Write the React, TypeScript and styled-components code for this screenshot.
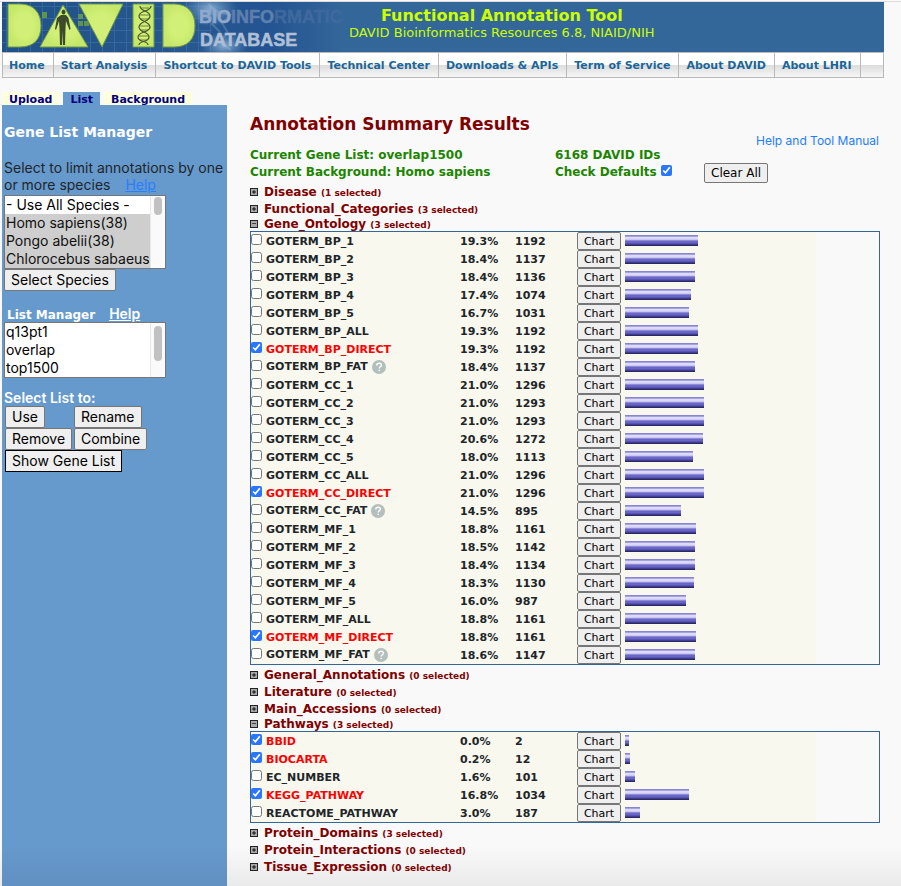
import React from 'react';
import styled, { createGlobalStyle } from 'styled-components';

const verdana = "Verdana, 'DejaVu Sans', sans-serif";
const system = "Inter, 'Liberation Sans', sans-serif";

const GlobalStyle = createGlobalStyle`
  *, *::before, *::after { box-sizing: border-box; }
  body {
    margin: 0;
    background: #f9f9f9;
    color: #212529;
    font-family: ${verdana};
    font-size: 11px;
  }
`;

const Page = styled.div`
  display: flex;
  flex-direction: column;
  min-height: 100vh;
  padding-left: 2px;
  background: linear-gradient(to top, #eaeaea, #f9f9f9 40px);
`;

const TopRule = styled.div`
  height: 2px;
  margin-left: -2px;
  border-bottom: 1px solid #dcdcdc;
`;

const Header = styled.header`
  display: flex;
  height: 50px;
  margin-right: 17px;
  background: #336699;
`;

const Logo = styled.svg`
  flex: none;
  width: 340px;
  height: 50px;
`;

const Titles = styled.div`
  padding: 4px 0 0 7px;
  color: #ccff00;
  text-align: center;
  white-space: nowrap;
`;

const ToolTitle = styled.div`
  font-size: 16px;
  font-weight: bold;
  line-height: 20px;
`;

const ToolSubtitle = styled.div`
  font-size: 13px;
  line-height: 14px;
`;

const Nav = styled.nav`
  display: flex;
  height: 26px;
  margin-right: 17px;
  border: 1px solid #b9b9b9;
  background: linear-gradient(#ffffff 12px, #dcdcdc 12px, #f6f6f6);
`;

const NavLink = styled.a`
  padding: 0 8px 0 6px;
  border-right: 1px solid #b9b9b9;
  margin-right: 1px;
  color: #1b6699;
  font-weight: bold;
  line-height: 25px;
  text-decoration: none;
  white-space: nowrap;
`;

const Tabs = styled.div`
  display: flex;
  gap: 4px;
  margin-top: 14px;
`;

const Tab = styled.a<{ $active?: boolean }>`
  height: 13px;
  padding: 0 7px;
  background: ${(p) => (p.$active ? '#6699cc' : '#ffffdd')};
  color: #000080;
  font-weight: bold;
  line-height: 15px;
  text-decoration: none;
`;

const Columns = styled.div`
  display: flex;
  flex: 1;
`;

const Sidebar = styled.aside`
  flex: none;
  width: 225px;
  padding: 17px 2px 0;
  background: linear-gradient(to top, #6190c2, #6699cc 40px);
  font-family: ${system};
  font-size: 14px;
`;

const SideTitle = styled.h2`
  margin: 0 0 17px;
  color: #fff;
  font-family: ${verdana};
  font-size: 14px;
  line-height: 20px;
`;

const SideText = styled.p`
  margin: 0 0 2px;
  line-height: 17px;
`;

const HelpLink = styled.a<{ $light?: boolean }>`
  margin-left: ${(p) => (p.$light ? 14 : 11)}px;
  color: ${(p) => (p.$light ? '#fff' : '#2a7fff')};
  font-family: ${system};
  font-size: 14px;
  font-weight: ${(p) => (p.$light ? 600 : 400)};
`;

const ListFrame = styled.div<{ $rows: number }>`
  display: flex;
  width: 162px;
  height: ${(p) => p.$rows * 18 + 2}px;
  border: 1px solid #767676;
  background: #fff;
`;

const ListBox = styled.select`
  flex: 1;
  min-width: 0;
  padding: 0;
  border: 0;
  border-radius: 0;
  outline: none;
  background: #fff;
  color: #000;
  font-family: ${system};
  font-size: 14px;
  scrollbar-width: none;

  option {
    min-height: 18px;
    padding: 0 1px;
    line-height: 18px;
  }
  option:checked { background: #cecece linear-gradient(#cecece, #cecece); }
`;

const Track = styled.div<{ $top: number }>`
  width: 15px;
  padding: ${(p) => p.$top}px 3px 0;
  border-left: 1px solid #e8e8e8;
  background: #fafafa;
`;

const Thumb = styled.div<{ $length: number }>`
  height: ${(p) => p.$length}px;
  border-radius: 4px;
  background: #c1c1c1;
`;

const Button = styled.button<{ $dark?: boolean }>`
  height: 22px;
  padding: 0 6px;
  border: 1px solid ${(p) => (p.$dark ? '#000' : '#767676')};
  border-radius: ${(p) => (p.$dark ? 0 : 2)}px;
  background: #efefef;
  color: #000;
  font-family: ${system};
  font-size: 14px;
  line-height: 20px;
  white-space: nowrap;
`;

const ListHeading = styled.div`
  margin-top: 16px;
  padding-left: 3px;
  color: #fff;
  font-family: ${verdana};
  font-size: 12px;
  font-weight: bold;
  line-height: 14px;
`;

const ActionsTitle = styled.div`
  margin-top: 12px;
  color: #fff;
  font-weight: 600;
  line-height: 16px;
`;

const Actions = styled.div`
  display: grid;
  grid-template-columns: 67px auto;
  justify-content: start;
  justify-items: start;
  column-gap: 2px;
  padding-left: 1px;
`;

const WideAction = styled.div`
  grid-column: 1 / -1;
`;

const Main = styled.main`
  flex: 1;
  padding: 9px 21px 0 23px;
`;

const Heading = styled.h1`
  margin: 0;
  color: #800000;
  font-size: 17px;
  line-height: 20px;
`;

const ManualRow = styled.div`
  text-align: right;
  font-family: ${system};
  font-size: 12px;
  line-height: 13px;

  a {
    padding-right: 1px;
    color: #1f7cff;
    text-decoration: none;
  }
`;

const Info = styled.div`
  display: grid;
  grid-template-columns: 305px 149px auto;
  grid-auto-rows: 17px;
  justify-content: start;
  margin-bottom: 2px;
  color: #1c8500;
  font-size: 12px;
  font-weight: bold;
  line-height: 17px;
`;

const ClearButton = styled(Button)`
  grid-column: 3;
  align-self: center;
  height: 20px;
  font-family: ${verdana};
  font-size: 12px;
  line-height: 18px;
`;

const Check = styled.input`
  flex: none;
  width: 11px;
  height: 11px;
  margin: 0;
  accent-color: #2a76ff;
`;

const DefaultsLabel = styled.label`
  display: flex;
  gap: 4px;

  input { margin-top: 1px; }
`;

const Category = styled.div<{ $open?: boolean }>`
  display: flex;
  align-items: center;
  gap: 6px;
  height: ${(p) => (p.$open ? 14 : 17)}px;
  color: #800000;
  font-size: 12px;
  font-weight: bold;
`;

const Toggle = styled.button`
  display: block;
  width: 8px;
  height: 8px;
  padding: 0;
  border: 0;
  background: none;

  svg { display: block; }
`;

const Selected = styled.span`
  font-size: 9px;
`;

const Box = styled.div`
  margin-bottom: 1px;
  border: 1px solid #336699;
`;

const Table = styled.table`
  width: 90%;
  border-collapse: collapse;
  table-layout: fixed;
  background: #f8f8ee;
  font-size: 11px;
  font-weight: bold;
`;

const Col = styled.col<{ $w?: number }>`
  width: ${(p) => (p.$w ? `${p.$w}px` : 'auto')};
`;

const Cell = styled.td`
  height: 18px;
  padding: 0;
  vertical-align: top;
`;

const FigureCell = styled(Cell)`
  padding-top: 2px;
  line-height: 16px;
`;

const TermLabel = styled.label<{ $on: boolean; $raised: boolean }>`
  display: flex;
  height: 18px;
  gap: 4px;
  color: ${(p) => (p.$on ? '#ff0000' : 'inherit')};
  line-height: ${(p) => (p.$raised ? 18 : 20)}px;

  input { margin-top: 2px; }
  svg { margin-top: 2px; }
`;

const ChartButton = styled.button`
  display: block;
  width: 44px;
  height: 18px;
  padding: 1px 0 0;
  border: 1px solid #767676;
  border-radius: 2px;
  background: #efefef;
  color: #000;
  font-family: ${verdana};
  font-size: 11px;
  line-height: 16px;
`;

const Bar = styled.div`
  height: 11px;
  margin-top: 3px;
  background: linear-gradient(
    #8783d6 0 1px, #a7a3e2 1px 2px, #dddaf6 2px 4px, #c9c6ef 4px 5px,
    #8f8bd9 5px 6px, #6a66c6 6px 8px, #5652b2 8px 9px, #403c90 9px 10px, #2c2962 10px 11px
  );
`;

type Term = [name: string, percent: string, count: number, bar: number, on?: boolean];

const ontology: Term[] = [
  ['GOTERM_BP_1', '19.3%', 1192, 73],
  ['GOTERM_BP_2', '18.4%', 1137, 70],
  ['GOTERM_BP_3', '18.4%', 1136, 70],
  ['GOTERM_BP_4', '17.4%', 1074, 66],
  ['GOTERM_BP_5', '16.7%', 1031, 64],
  ['GOTERM_BP_ALL', '19.3%', 1192, 73],
  ['GOTERM_BP_DIRECT', '19.3%', 1192, 73, true],
  ['GOTERM_BP_FAT', '18.4%', 1137, 70],
  ['GOTERM_CC_1', '21.0%', 1296, 79],
  ['GOTERM_CC_2', '21.0%', 1293, 79],
  ['GOTERM_CC_3', '21.0%', 1293, 79],
  ['GOTERM_CC_4', '20.6%', 1272, 78],
  ['GOTERM_CC_5', '18.0%', 1113, 68],
  ['GOTERM_CC_ALL', '21.0%', 1296, 79],
  ['GOTERM_CC_DIRECT', '21.0%', 1296, 79, true],
  ['GOTERM_CC_FAT', '14.5%', 895, 56],
  ['GOTERM_MF_1', '18.8%', 1161, 71],
  ['GOTERM_MF_2', '18.5%', 1142, 70],
  ['GOTERM_MF_3', '18.4%', 1134, 70],
  ['GOTERM_MF_4', '18.3%', 1130, 69],
  ['GOTERM_MF_5', '16.0%', 987, 61],
  ['GOTERM_MF_ALL', '18.8%', 1161, 71],
  ['GOTERM_MF_DIRECT', '18.8%', 1161, 71, true],
  ['GOTERM_MF_FAT', '18.6%', 1147, 70],
];

const pathways: Term[] = [
  ['BBID', '0.0%', 2, 4, true],
  ['BIOCARTA', '0.2%', 12, 5, true],
  ['EC_NUMBER', '1.6%', 101, 10],
  ['KEGG_PATHWAY', '16.8%', 1034, 64, true],
  ['REACTOME_PATHWAY', '3.0%', 187, 15],
];

const categories: { name: string; selected: number; terms?: Term[] }[] = [
  { name: 'Disease', selected: 1 },
  { name: 'Functional_Categories', selected: 3 },
  { name: 'Gene_Ontology', selected: 3, terms: ontology },
  { name: 'General_Annotations', selected: 0 },
  { name: 'Literature', selected: 0 },
  { name: 'Main_Accessions', selected: 0 },
  { name: 'Pathways', selected: 3, terms: pathways },
  { name: 'Protein_Domains', selected: 3 },
  { name: 'Protein_Interactions', selected: 0 },
  { name: 'Tissue_Expression', selected: 0 },
];

const navItems = [
  'Home', 'Start Analysis', 'Shortcut to DAVID Tools', 'Technical Center',
  'Downloads & APIs', 'Term of Service', 'About DAVID', 'About LHRI',
];

function DavidLogo() {
  return (
    <Logo viewBox="0 0 340 50" aria-hidden="true">
      <defs>
        <linearGradient id="sky" x1="0" x2="1">
          <stop offset="0" stopColor="#1f5288" />
          <stop offset="0.55" stopColor="#27588f" />
          <stop offset="0.78" stopColor="#235391" />
          <stop offset="1" stopColor="#336699" />
        </linearGradient>
        <radialGradient id="glow">
          <stop offset="0" stopColor="#9fc0df" stopOpacity="0.8" />
          <stop offset="1" stopColor="#6f9cc8" stopOpacity="0" />
        </radialGradient>
        <pattern id="grid" width="12" height="12" patternUnits="userSpaceOnUse">
          <path d="M0 4.500H12M4.500 0V12" stroke="#4579ad" strokeWidth="1" opacity="0.5" />
        </pattern>
        <radialGradient id="lime">
          <stop offset="0.5" stopColor="#d2f078" />
          <stop offset="1" stopColor="#c5e86a" />
        </radialGradient>
      </defs>
      <rect width="340" height="50" fill="url(#sky)" />
      <rect width="210" height="50" fill="url(#grid)" />
      <ellipse cx="208" cy="7" rx="28" ry="18" fill="url(#glow)" />
      <ellipse cx="222" cy="44" rx="24" ry="14" fill="url(#glow)" />
      <path d="M206 2l10 8 12 3-8 8 6 10-9 9 12 8M216 10l-6 12 8 8" fill="none" stroke="#b4cde5" strokeWidth="2" opacity="0.25" />
      <g fill="#5f9350">
        <rect x="40" y="10" width="5" height="6" />
        <rect x="76" y="12" width="5" height="5" />
        <rect x="76" y="19" width="5" height="5" />
        <rect x="82" y="19" width="5" height="5" />
      </g>
      <g fill="url(#lime)" stroke="#719744" strokeWidth="1">
        <path d="M6 2h12c14 0 21 9 21 22s-7 21-21 21H6z" />
        <path d="M61 3l25 42H38z" />
        <path d="M77 2h44l-21 43z" />
        <path d="M131 2h21v43h-21z" />
        <path d="M161 2h11c14 0 21 9 21 22s-7 21-21 21h-11z" />
      </g>
      <g fill="#3d4a2b">
        <ellipse cx="61.500" cy="10" rx="2" ry="2.500" />
        <path d="M59 13h5l2.500 3 2 11-1 1-3.500-9-.5 8-.5 16h-2l-.5-14-.5 14h-2l-.5-16-.5-8-3 9-1-1 2-11z" />
      </g>
      <g fill="none" stroke="#46542c" strokeWidth="1.200">
        <path d="M138 4c0 6 10 4 10 10s-11 5-11 11 10 4 10 10-10 3-10 8" />
        <path d="M149 4c0 6-12 4-12 10s11 5 11 11-12 4-12 10 10 3 10 8" />
        <path d="M139 6h8M138 13h9M138 17h8M138 24h9M138 28h8M137 34h9M138 38h7" strokeWidth="0.700" />
      </g>
      <g fontFamily="'Liberation Sans', sans-serif" fontWeight="bold" strokeWidth="0.500">
        <text x="197" y="21" fontSize="18" fill="#8fa9cd" stroke="#8fa9cd">BIO<tspan fill="#5d7fae" stroke="#5d7fae">INFO</tspan><tspan fill="#3f699e" stroke="#3f699e">RMATIC</tspan></text>
        <text x="198" y="44" fontSize="18" fill="#aebfd6" stroke="#aebfd6">DATABASE</text>
      </g>
    </Logo>
  );
}

function ToggleIcon({ open }: { open: boolean }) {
  return (
    <svg width="8" height="8" viewBox="0 0 8 8" shapeRendering="crispEdges">
      <rect width="8" height="8" fill="#222" />
      <rect x="1" y="1" width="6" height="6" fill="#aaa" />
      {open ? (
        <rect x="2" y="3" width="4" height="1" fill="#444" />
      ) : (
        <>
          <path d="M3 2h2v1h1v2H5v1H3V5H2V3h1z" fill="#666" />
          <rect x="3" y="3" width="2" height="2" fill="#333" />
        </>
      )}
    </svg>
  );
}

function HelpIcon() {
  return (
    <svg width="14" height="14" viewBox="0 0 14 14">
      <circle cx="7" cy="7" r="7" fill="#b3bfbd" />
      <path d="M4.800 5.400c0-3 4.600-2.800 4.600-.2 0 1.500-2.200 1.600-2.200 3.200M7.200 9.700v1.400" fill="none" stroke="#fff" strokeWidth="1.500" />
    </svg>
  );
}

function TermTable({ name, terms }: { name: string; terms: Term[] }) {
  return (
    <Box>
      <Table aria-label={name}>
        <colgroup>
          <Col $w={209} />
          <Col $w={55} />
          <Col $w={62} />
          <Col $w={48} />
          <Col />
        </colgroup>
        <tbody>
          {terms.map(([term, percent, count, bar, on]) => (
            <tr key={term}>
              <Cell>
                <TermLabel $on={!!on} $raised={term.endsWith('FAT')}>
                  <Check type="checkbox" defaultChecked={on} />
                  {term}
                  {term.endsWith('FAT') && <HelpIcon />}
                </TermLabel>
              </Cell>
              <FigureCell>{percent}</FigureCell>
              <FigureCell>{count}</FigureCell>
              <Cell><ChartButton type="button">Chart</ChartButton></Cell>
              <Cell><Bar style={{ width: bar }} /></Cell>
            </tr>
          ))}
        </tbody>
      </Table>
    </Box>
  );
}

export default function App() {
  return (
    <Page>
      <GlobalStyle />
      <TopRule />
      <Header>
        <DavidLogo />
        <Titles>
          <ToolTitle>Functional Annotation Tool</ToolTitle>
          <ToolSubtitle>DAVID Bioinformatics Resources 6.8, NIAID/NIH</ToolSubtitle>
        </Titles>
      </Header>
      <Nav>
        {navItems.map((item) => <NavLink href="#" key={item}>{item}</NavLink>)}
      </Nav>
      <Tabs>
        <Tab href="#">Upload</Tab>
        <Tab href="#" $active>List</Tab>
        <Tab href="#">Background</Tab>
      </Tabs>
      <Columns>
        <Sidebar>
          <SideTitle>Gene List Manager</SideTitle>
          <SideText>
            <label htmlFor="species">Select to limit annotations by one or more species</label>{' '}
            <HelpLink href="#">Help</HelpLink>
          </SideText>
          <ListFrame $rows={4}>
            <ListBox
              id="species"
              multiple
              size={4}
              defaultValue={['Homo sapiens(38)', 'Pongo abelii(38)', 'Chlorocebus sabaeus']}
            >
              <option>- Use All Species -</option>
              <option>Homo sapiens(38)</option>
              <option>Pongo abelii(38)</option>
              <option>Chlorocebus sabaeus</option>
            </ListBox>
            <Track $top={1}><Thumb $length={18} /></Track>
          </ListFrame>
          <Button type="button">Select Species</Button>
          <ListHeading>
            <label htmlFor="lists">List Manager</label>
            <HelpLink href="#" $light>Help</HelpLink>
          </ListHeading>
          <ListFrame $rows={3}>
            <ListBox id="lists" multiple size={3}>
              <option>q13pt1</option>
              <option>overlap</option>
              <option>top1500</option>
            </ListBox>
            <Track $top={3}><Thumb $length={35} /></Track>
          </ListFrame>
          <ActionsTitle>Select List to:</ActionsTitle>
          <Actions>
            <Button type="button">Use</Button>
            <Button type="button">Rename</Button>
            <Button type="button">Remove</Button>
            <Button type="button">Combine</Button>
            <WideAction><Button type="button" $dark>Show Gene List</Button></WideAction>
          </Actions>
        </Sidebar>
        <Main>
          <Heading>Annotation Summary Results</Heading>
          <ManualRow><a href="#">Help and Tool Manual</a></ManualRow>
          <Info>
            <span>Current Gene List: overlap1500</span>
            <span>6168 DAVID IDs</span>
            <span />
            <span>Current Background: Homo sapiens</span>
            <DefaultsLabel>
              Check Defaults <Check type="checkbox" defaultChecked />
            </DefaultsLabel>
            <ClearButton type="button">Clear All</ClearButton>
          </Info>
          {categories.map(({ name, selected, terms }) => (
            <React.Fragment key={name}>
              <Category $open={!!terms}>
                <Toggle type="button" aria-label={name} aria-expanded={!!terms}>
                  <ToggleIcon open={!!terms} />
                </Toggle>
                <span>{name} <Selected>({selected} selected)</Selected></span>
              </Category>
              {terms && <TermTable name={name} terms={terms} />}
            </React.Fragment>
          ))}
        </Main>
      </Columns>
    </Page>
  );
}
